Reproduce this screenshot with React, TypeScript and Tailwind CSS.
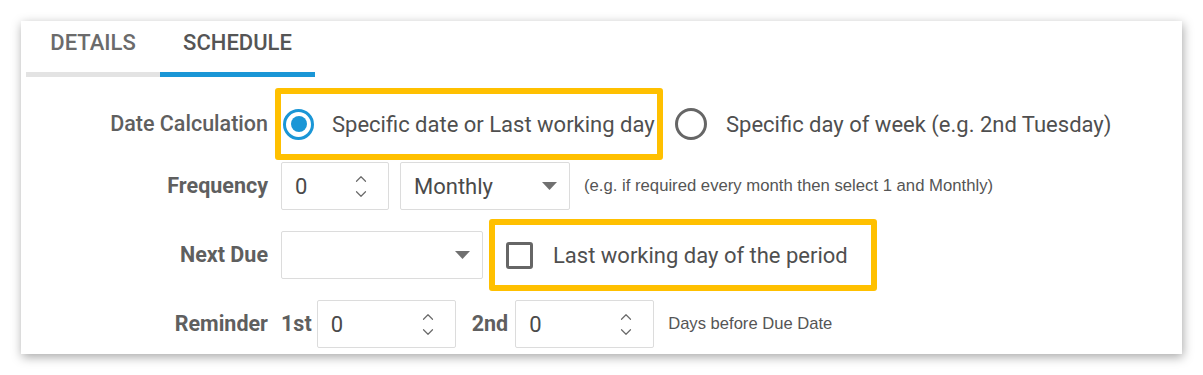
import { ChevronUp, ChevronDown } from "lucide-react";

const roboto = { fontFamily: "Roboto, 'Liberation Sans', sans-serif" };
const arial = { fontFamily: "'Liberation Sans', Arial, sans-serif" };

const Spinner = ({ value, width }: { value: string; width: string }) => (
  <div className={`flex-none ${width} h-[48px] border border-[#dcdcdc] rounded-[2px] bg-white flex items-center justify-between pl-[13px] pr-[18px]`}>
    <span className="text-[22px] text-[#4a4a4a]">{value}</span>
    <div className="flex flex-col items-center -space-y-[3px] text-[#6a6a6a]">
      <ChevronUp size={18} strokeWidth={1.6} />
      <ChevronDown size={18} strokeWidth={1.6} />
    </div>
  </div>
);

const Caret = () => (
  <svg width="15" height="8" viewBox="0 0 15 8">
    <path d="M0 0 L15 0 L7.5 8 Z" fill="#707070" />
  </svg>
);

const Select = ({ value, width }: { value: string; width: string }) => (
  <div className={`flex-none ${width} h-[48px] border border-[#dcdcdc] rounded-[2px] bg-white flex items-center justify-between pl-[13px] pr-[12px]`}>
    <span className="text-[22px] text-[#4a4a4a]">{value}</span>
    <Caret />
  </div>
);

const Label = ({ children, bold = true }: { children: React.ReactNode; bold?: boolean }) => (
  <div className={`flex-none w-[247px] text-right text-[21.5px] text-[#5f5f5f] ${bold ? "font-bold" : "font-medium"}`}>
    {children}
  </div>
);

export default function App() {
  return (
    <div className="min-h-screen bg-white pt-[21px] pl-[21px]" style={roboto}>
      <div className="w-[1161px] h-[333px] bg-white shadow-[1px_3px_10px_rgba(0,0,0,0.35)] overflow-hidden">
        {/* Tabs */}
        <div className="flex ml-[5px]">
          <div className="w-[134px] h-[56px] pt-[5px] text-center text-[22px] font-medium text-[#6b6b6b] border-b-[5px] border-[#e3e3e3]">
            DETAILS
          </div>
          <div className="w-[155px] h-[56px] pt-[5px] text-center text-[22px] font-medium text-[#555] border-b-[5px] border-[#1a96d6]">
            SCHEDULE
          </div>
        </div>

        {/* Date Calculation */}
        <div className="flex items-center h-[72px] mt-[11px]">
          <Label bold={false}>Date Calculation</Label>
          <div className="ml-[7px] w-[388px] h-[72px] border-[6px] border-[#ffc000] rounded-[3px] flex items-center pl-[2px]">
            <div className="w-[31px] h-[31px] rounded-full border-[3px] border-[#1a96d6] flex items-center justify-center">
              <div className="w-[16px] h-[16px] rounded-full bg-[#1a96d6]" />
            </div>
            <span className="ml-[18px] text-[22px] text-[#4f4f4f]">Specific date or Last working day</span>
          </div>
          <div className="ml-[12px] w-[32px] h-[32px] rounded-full border-[3px] border-[#666]" />
          <span className="ml-[19px] text-[22px] text-[#4f4f4f]">Specific day of week (e.g. 2nd Tuesday)</span>
        </div>

        {/* Frequency */}
        <div className="flex items-center h-[48px] mt-[2px]">
          <Label>Frequency</Label>
          <div className="ml-[13px] flex items-center">
            <Spinner value="0" width="w-[108px]" />
            <div className="ml-[11px]">
              <Select value="Monthly" width="w-[170px]" />
            </div>
            <span className="ml-[14px] text-[16.7px] text-[#555]" style={arial}>
              (e.g. if required every month then select 1 and Monthly)
            </span>
          </div>
        </div>

        {/* Next Due */}
        <div className="flex items-center h-[72px] mt-[9px]">
          <Label>Next Due</Label>
          <div className="ml-[13px]">
            <Select value="" width="w-[202px]" />
          </div>
          <div className="ml-[6px] w-[388px] h-[72px] border-[6px] border-[#ffc000] rounded-[3px] flex items-center pl-[11px]">
            <div className="w-[27px] h-[27px] rounded-[3px] border-[3px] border-[#666]" />
            <span className="ml-[20px] text-[22px] text-[#4f4f4f]">Last working day of the period</span>
          </div>
        </div>

        {/* Reminder */}
        <div className="flex items-center h-[48px] mt-[9px]">
          <Label>Reminder</Label>
          <span className="ml-[13px] text-[21.5px] font-bold text-[#5f5f5f]">1st</span>
          <div className="ml-[5px]">
            <Spinner value="0" width="w-[139px]" />
          </div>
          <span className="ml-[16px] text-[21.5px] font-bold text-[#5f5f5f]">2nd</span>
          <div className="ml-[7px]">
            <Spinner value="0" width="w-[139px]" />
          </div>
          <span className="ml-[14px] text-[16.6px] text-[#555]" style={arial}>
            Days before Due Date
          </span>
        </div>
      </div>
    </div>
  );
}
